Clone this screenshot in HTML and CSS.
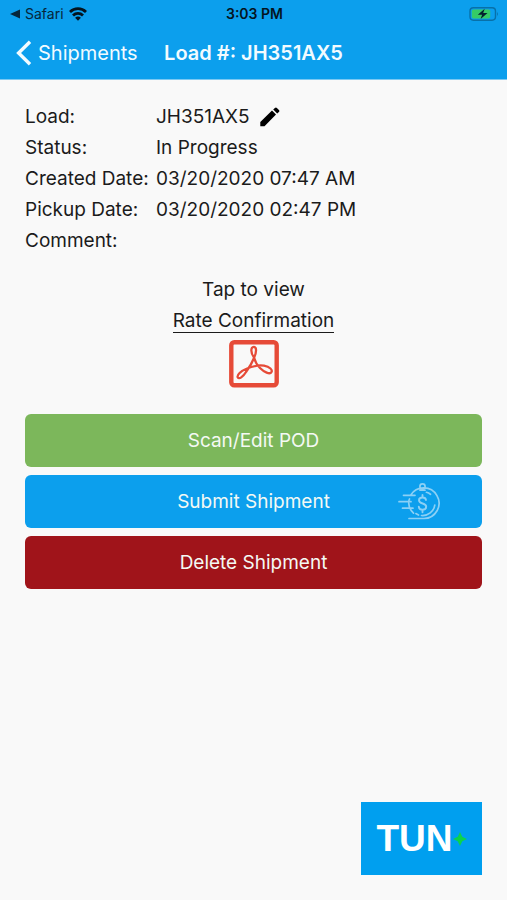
FILE: index.html
```html
<!DOCTYPE html>
<html lang="en">
<head>
<meta charset="utf-8">
<meta name="viewport" content="width=device-width, initial-scale=1">
<title>Load #: JH351AX5</title>
<link rel="stylesheet" href="styles.css">
</head>
<body>
<header class="header">
  <div class="status">
    <div class="status-left">
      <a class="status-back" href="#"><svg width="10" height="10" viewBox="0 0 10 10" aria-hidden="true"><path d="M0 5 10 .5v9z" fill="currentColor"/></svg>Safari</a>
      <svg width="18" height="14" viewBox="0 0 18 14" aria-hidden="true" fill="none" stroke="#04141f" stroke-width="2.8"><path d="M1 4.900a11.400 11.400 0 0 1 16 0M4 8.400a7.200 7.200 0 0 1 10 0"/><path d="M9 13.700 6.100 10.800a4.200 4.200 0 0 1 5.800 0z" fill="#04141f" stroke="none"/></svg>
    </div>
    <time class="clock">3:03 PM</time>
    <svg class="battery" width="30" height="14" viewBox="0 0 30 14" aria-hidden="true"><rect x="1" y=".8" width="25.5" height="12.4" rx="3.4" fill="none" stroke="#0870a8" stroke-width="1.4"/><rect x="2.8" y="2.6" width="18.4" height="8.8" rx="1.6" fill="#35cb66"/><path d="M28 4.8q1.800 2.200 0 4.400z" fill="#0870a8"/><path d="M15.700 1.800 8.800 7.700h4.300L11.600 12l6.900-6h-4.300z" fill="#03202e"/></svg>
  </div>
  <nav class="nav">
    <a class="nav-back" href="#"><svg width="16" height="26" viewBox="0 0 16 26" aria-hidden="true"><path d="M14 1.800 2.600 13 14 24.200" fill="none" stroke="currentColor" stroke-width="3.400"/></svg>Shipments</a>
    <h1 class="title">Load #: JH351AX5</h1>
  </nav>
</header>
<main class="main">
  <dl class="details">
    <dt>Load:</dt>
    <dd>JH351AX5 <button class="edit" type="button" aria-label="Edit load"><svg width="20" height="20" viewBox="0 0 20 20" aria-hidden="true"><path d="M.3 15 12 3.600l4 4L4.500 19.200H.3zM13.200 2.500l1.700-1.600q1-1 2 0l2 2q1 1 0 2l-1.700 1.600z"/></svg></button></dd>
    <dt>Status:</dt><dd>In Progress</dd>
    <dt>Created Date:</dt><dd>03/20/2020 07:47 AM</dd>
    <dt>Pickup Date:</dt><dd>03/20/2020 02:47 PM</dd>
    <dt>Comment:</dt><dd></dd>
  </dl>
  <section class="document">
    <p>Tap to view</p>
    <a class="document-link" href="#"><span class="document-name">Rate Confirmation</span>
      <svg width="50" height="48" viewBox="0 0 50 48" fill="none" stroke="#e64b38" aria-hidden="true"><rect x="2.300" y="2.300" width="45.400" height="43" rx="3" stroke-width="4.400"/><path d="M25 17.500C21.500 13 21.500 6.800 24.800 6.800C28 6.800 27.500 13 25 18C23 23 20 28 17 32C14 37 10 39.500 8.800 37.500C7.500 35 12 31 17.500 28.800C23 26.300 30 25 35 25.700C41 26.800 43.700 30 42.500 32C41 35 35 32 31 28C28 25 26 21.500 25 17.500z" stroke-width="2.300"/></svg>
    </a>
  </section>
  <div class="actions">
    <button class="action scan" type="button">Scan/Edit POD</button>
    <button class="action submit" type="button">Submit Shipment
      <svg class="money" width="42" height="38" viewBox="0 0 42 38" fill="none" stroke="#8bd0f5" stroke-width="1.700" stroke-linecap="round" aria-hidden="true"><circle cx="24.500" cy="3.500" r="2.600"/><path d="M22 7.200h5M12.600 12.300A15.300 15.300 0 1 1 26 35.500H11M11.500 16q-.7 1.500-.8 2.700M10.700 20q.3 6 4.800 10.200M28.500 9.300a12.300 12.300 0 0 1 4 2M36.800 22a12.300 12.300 0 0 1-13.300 10.500M20.500 32l-2.600-1.400M5.500 12.300H17M1 18.700h12M4.500 25.200H15"/><path d="M28 17c-.2-1.700-1.500-2.500-3.500-2.500s-3.500 1-3.500 2.700c0 4.300 7.200 2.300 7.200 6.500 0 2-1.600 2.900-3.700 2.900s-3.600-1-3.700-2.800M24.500 12v2.300M24.500 26.800v2.400" stroke-width="1.900"/></svg>
    </button>
    <button class="action delete" type="button">Delete Shipment</button>
  </div>
</main>
<footer class="footer">
  <a class="brand" href="#">TUN<svg width="14" height="14" viewBox="0 0 14 14" aria-hidden="true"><path d="M7 0 9.300 4.700 14 7 9.300 9.300 7 14 4.700 9.300 0 7 4.700 4.700z" fill="#0cd34b"/></svg></a>
</footer>
</body>
</html>
```
FILE: styles.css
```css
* {
  box-sizing: border-box;
}

body {
  display: flex;
  flex-direction: column;
  min-height: 100vh;
  margin: 0;
  background: #f9f9f9;
  color: #1b1b1b;
  font: 19px/31px Inter, "Liberation Sans", sans-serif;
}

a {
  color: inherit;
  text-decoration: none;
}

button {
  border: 0;
  font: inherit;
  cursor: pointer;
}

.header {
  background: #0c9fed;
  border-bottom: 1px solid #7cc9f3;
}

.status {
  display: grid;
  grid-template-columns: 1fr auto 1fr;
  align-items: center;
  height: 27px;
  padding: 0 8px 0 10px;
  color: #06263b;
  font-size: 14px;
  line-height: 27px;
}

.status-left,
.status-back {
  display: flex;
  align-items: center;
  gap: 5px;
}

.clock {
  color: #04141f;
  font-weight: 600;
}

.battery {
  justify-self: end;
}

.nav {
  display: grid;
  grid-template-columns: 1fr auto 1fr;
  align-items: center;
  height: 52px;
  padding: 0 16px;
  color: #f2fbff;
  font-size: 20px;
}

.nav-back {
  display: flex;
  align-items: center;
  gap: 6px;
}

.title {
  margin: 0;
  font-size: 20px;
  font-weight: 600;
}

.main {
  flex: 1;
  padding: 21px 25px;
}

.details {
  display: grid;
  grid-template-columns: 131px 1fr;
  margin: 0 0 18px;
}

.details dt {
  white-space: nowrap;
}

.details dd {
  display: flex;
  align-items: center;
  gap: 10px;
  height: 31px;
  margin: 0;
}

.edit {
  display: flex;
  padding: 0;
  background: none;
}

.document {
  text-align: center;
}

.document p {
  margin: 0;
}

.document-link {
  display: flex;
  flex-direction: column;
  align-items: center;
  gap: 7px;
}

.document-name {
  height: 28px;
  border-bottom: 1px solid #1b1b1b;
}

.actions {
  display: grid;
  gap: 8px;
  margin-top: 26px;
}

.action {
  position: relative;
  height: 53px;
  border-radius: 6px;
  color: #f4f9f4;
}

.scan {
  background: #7cb75b;
}

.submit {
  background: #0c9fed;
}

.delete {
  background: #a0141a;
}

.money {
  position: absolute;
  top: 8px;
  right: 42px;
}

.footer {
  display: flex;
  justify-content: flex-end;
  padding: 0 25px 25px;
}

.brand {
  display: flex;
  align-items: center;
  justify-content: center;
  width: 121px;
  height: 73px;
  background: #009fef;
  color: #fff;
  font: bold 37px/73px "Liberation Sans", sans-serif;
}
```
